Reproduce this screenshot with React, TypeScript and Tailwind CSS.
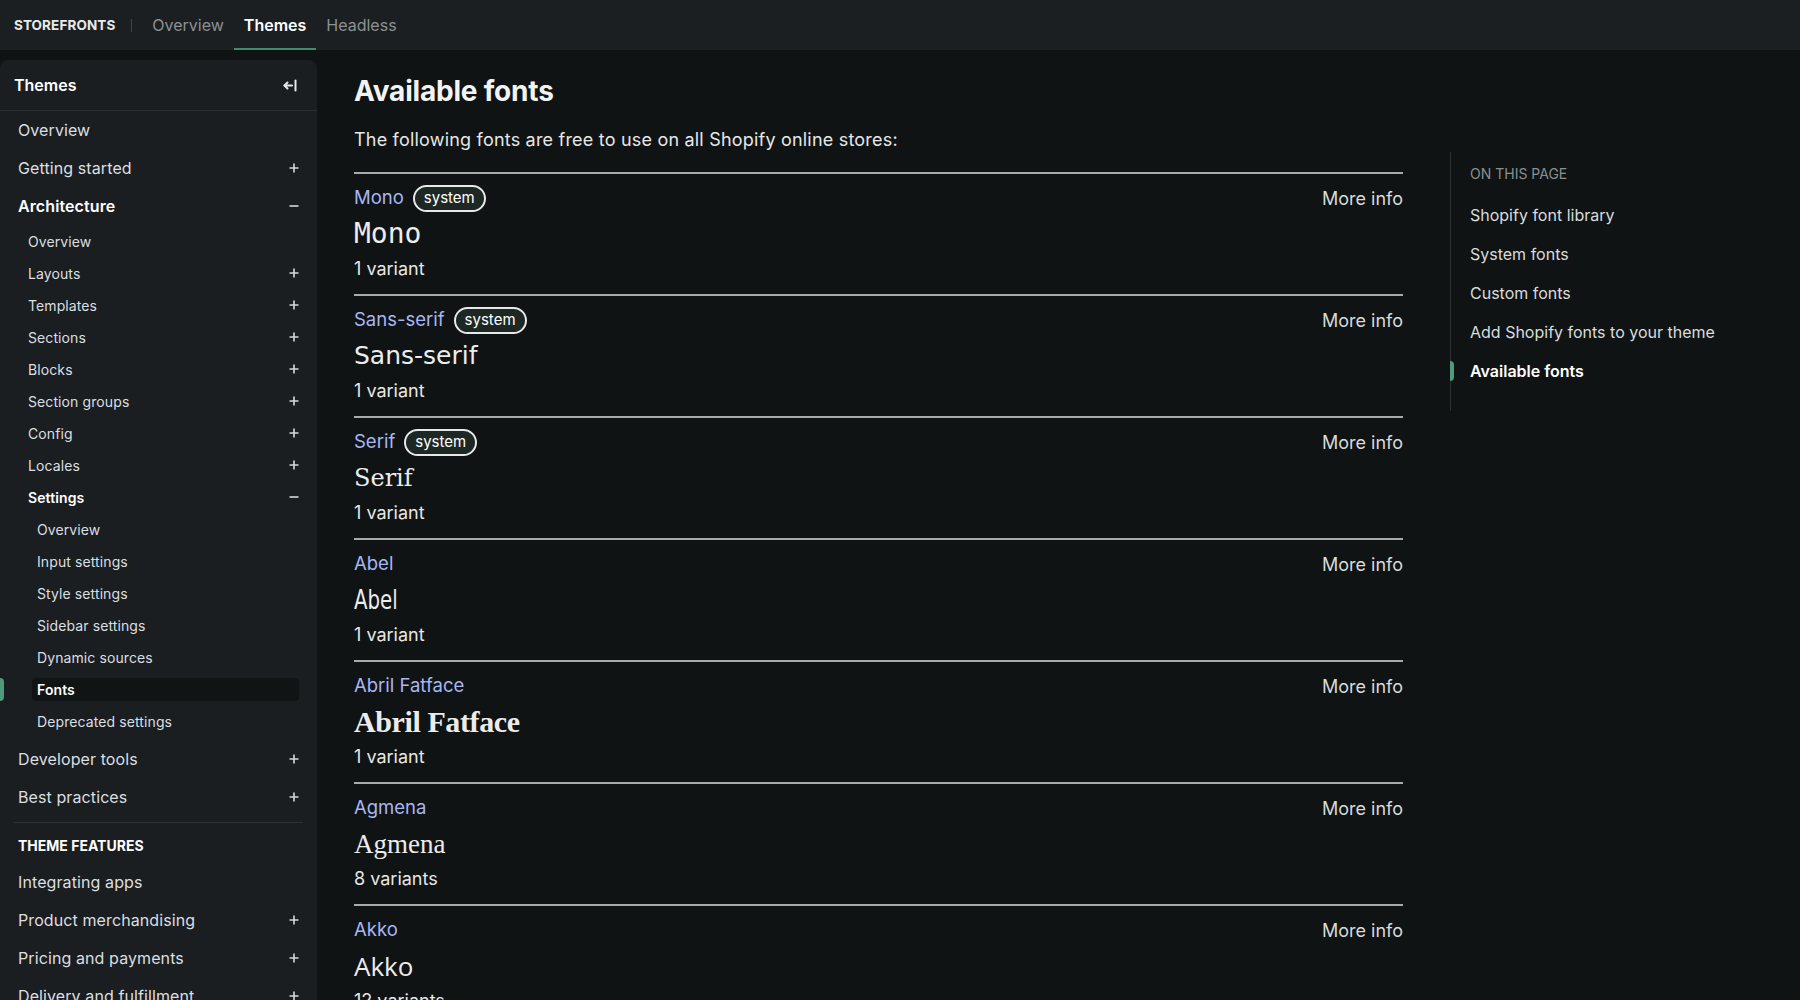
import { ReactNode } from "react";

const fonts = [
  { name: "Mono", system: true, variants: "1 variant", preview: "font-['DejaVu_Sans_Mono',monospace] text-[28px]" },
  { name: "Sans-serif", system: true, variants: "1 variant", preview: "font-['DejaVu_Sans',sans-serif] text-[25px]" },
  { name: "Serif", system: true, variants: "1 variant", preview: "font-['DejaVu_Serif',serif] text-[24px]" },
  { name: "Abel", system: false, variants: "1 variant", preview: "font-['DejaVu_Sans',sans-serif] text-[26px] inline-block origin-left [transform:scaleX(0.76)]" },
  { name: "Abril Fatface", system: false, variants: "1 variant", preview: "font-['Liberation_Serif',serif] font-bold text-[30px] tracking-[-0.4px]" },
  { name: "Agmena", system: false, variants: "8 variants", preview: "font-['Liberation_Serif',serif] text-[27px]" },
  { name: "Akko", system: false, variants: "12 variants", preview: "font-['Open_Sans',sans-serif] font-medium text-[26px]" },
];

const toc = ["Shopify font library", "System fonts", "Custom fonts", "Add Shopify fonts to your theme", "Available fonts"];

function Plus() {
  return (
    <svg width="10" height="10" viewBox="0 0 10 10" className="shrink-0">
      <path d="M5 0.5v9M0.5 5h9" stroke="#d6d9da" strokeWidth="1.6" />
    </svg>
  );
}

function Minus() {
  return (
    <svg width="10" height="10" viewBox="0 0 10 10" className="shrink-0">
      <path d="M0.5 5h9" stroke="#d6d9da" strokeWidth="1.6" />
    </svg>
  );
}

function TopItem({ label, icon, bold }: { label: string; icon?: ReactNode; bold?: boolean }) {
  return (
    <div className="flex h-[38px] items-center justify-between pl-[18px] pr-[18px]">
      <span className={`text-[16px] tracking-[0.1px] ${bold ? "font-semibold text-white" : "text-[#dcdfe0]"}`}>{label}</span>
      {icon}
    </div>
  );
}

function SubItem({ label, icon, bold }: { label: string; icon?: ReactNode; bold?: boolean }) {
  return (
    <div className="flex h-[32px] items-center justify-between pl-[28px] pr-[18px]">
      <span className={`text-[14px] tracking-[0.1px] ${bold ? "font-semibold text-white" : "text-[#dcdfe0]"}`}>{label}</span>
      {icon}
    </div>
  );
}

function LeafItem({ label, active }: { label: string; active?: boolean }) {
  return (
    <div className="relative flex h-[32px] items-center pl-[32px] pr-[18px]">
      {active && <span className="absolute left-0 top-[5px] h-[23px] w-[4px] rounded-r-sm bg-[#4f9a7c]" />}
      <span
        className={`flex h-[23px] w-full items-center rounded pl-[5px] text-[14px] tracking-[0.1px] ${
          active ? "bg-[#101415] font-semibold text-white" : "text-[#dcdfe0]"
        }`}
      >
        {label}
      </span>
    </div>
  );
}

function Sidebar() {
  return (
    <aside className="mt-[10px] w-[317px] shrink-0 rounded-t-lg bg-[#1a1e20]">
      <div className="flex h-[51px] items-center justify-between border-b border-[#2a3033] pl-[14px] pr-[20px]">
        <span className="text-[16px] font-semibold text-white">Themes</span>
        <svg width="14" height="13" viewBox="0 0 14 13" fill="none" stroke="#e8eaea" strokeWidth="2" strokeLinecap="round" strokeLinejoin="round">
          <path d="M12.5 1.5v10" />
          <path d="M9 6.5H1.5" />
          <path d="M4.5 3.5l-3 3 3 3" />
        </svg>
      </div>
      <TopItem label="Overview" />
      <TopItem label="Getting started" icon={<Plus />} />
      <TopItem label="Architecture" bold icon={<Minus />} />
      <SubItem label="Overview" />
      <SubItem label="Layouts" icon={<Plus />} />
      <SubItem label="Templates" icon={<Plus />} />
      <SubItem label="Sections" icon={<Plus />} />
      <SubItem label="Blocks" icon={<Plus />} />
      <SubItem label="Section groups" icon={<Plus />} />
      <SubItem label="Config" icon={<Plus />} />
      <SubItem label="Locales" icon={<Plus />} />
      <SubItem label="Settings" bold icon={<Minus />} />
      <LeafItem label="Overview" />
      <LeafItem label="Input settings" />
      <LeafItem label="Style settings" />
      <LeafItem label="Sidebar settings" />
      <LeafItem label="Dynamic sources" />
      <LeafItem label="Fonts" active />
      <LeafItem label="Deprecated settings" />
      <div className="h-[3px]" />
      <TopItem label="Developer tools" icon={<Plus />} />
      <TopItem label="Best practices" icon={<Plus />} />
      <div className="mx-[14px] mt-[6px] border-t border-[#2c3336]" />
      <div className="flex h-[40px] items-center pl-[18px] pt-[5px] text-[14px] font-bold text-white">THEME FEATURES</div>
      <TopItem label="Integrating apps" />
      <TopItem label="Product merchandising" icon={<Plus />} />
      <TopItem label="Pricing and payments" icon={<Plus />} />
      <TopItem label="Delivery and fulfillment" icon={<Plus />} />
    </aside>
  );
}

function FontRow({ f }: { f: (typeof fonts)[number] }) {
  return (
    <div className="border-t-2 border-[#a9abab] pb-[11px] pt-[10px]">
      <div className="flex h-[28px] items-center justify-between">
        <div className="flex items-center gap-[9px]">
          <span className="text-[18.5px] text-[#a9b6f2]">{f.name}</span>
          {f.system && (
            <span className="flex h-[27px] items-center rounded-full border-2 border-[#e8e8e8] bg-[#1d2824] px-[9px] text-[15px] text-white">
              system
            </span>
          )}
        </div>
        <span className="text-[18px] text-[#d8dadb]">More info</span>
      </div>
      <div className="mt-[4px] h-[36px] leading-[36px] text-[#ececec]">
        <span className={f.preview}>{f.name}</span>
      </div>
      <div className="mt-[3px] text-[18px] leading-[28px] text-[#e6e7e7]">{f.variants}</div>
    </div>
  );
}

export default function App() {
  return (
    <div className="h-[1000px] overflow-hidden bg-[#0f1314] font-['Inter','Liberation_Sans',sans-serif]">
      <header className="flex h-[50px] items-center bg-[#1b1f21] pl-[14px]">
        <span className="text-[13.5px] font-bold tracking-[0.1px] text-[#e8eaea]">STOREFRONTS</span>
        <span className="ml-[16px] h-[13px] w-px bg-[#3f4446]" />
        <nav className="ml-[10px] flex h-full">
          <a className="flex items-center px-[10px] text-[16px] text-[#8c9193]">Overview</a>
          <a className="flex items-center border-b-2 border-[#3f8c6f] px-[10px] pt-[2px] text-[16px] font-semibold text-white">Themes</a>
          <a className="flex items-center px-[10px] text-[16px] text-[#8c9193]">Headless</a>
        </nav>
      </header>
      <div className="flex">
        <Sidebar />
        <main className="w-[1086px] shrink-0 pl-[37px] pt-[23px]">
          <h1 className="text-[28px] font-bold leading-[36px] tracking-[-0.2px] text-[#f2f3f3]">Available fonts</h1>
          <p className="mt-[17px] text-[18px] leading-[28px] tracking-[0.2px] text-[#e6e7e7]">
            The following fonts are free to use on all Shopify online stores:
          </p>
          <div className="mt-[18px]">
            {fonts.map((f) => (
              <FontRow key={f.name} f={f} />
            ))}
          </div>
        </main>
        <nav className="ml-[47px] mt-[102px] h-[259px] border-l border-[#2a3033] pb-[28px] pl-[19px] pt-[12px]">
          <div className="text-[14px] leading-[20px] text-[#8a8f91]">ON THIS PAGE</div>
          <div className="mt-[19px] flex flex-col gap-[15px]">
            {toc.map((t, i) => (
              <div key={t} className="relative text-[16px] leading-[24px]">
                {i === toc.length - 1 && <span className="absolute left-[-20px] top-[2px] h-[20px] w-[4px] rounded-r-sm bg-[#4f9a7c]" />}
                <span className={i === toc.length - 1 ? "font-semibold text-white" : "text-[#d9dcdd]"}>{t}</span>
              </div>
            ))}
          </div>
        </nav>
      </div>
    </div>
  );
}
